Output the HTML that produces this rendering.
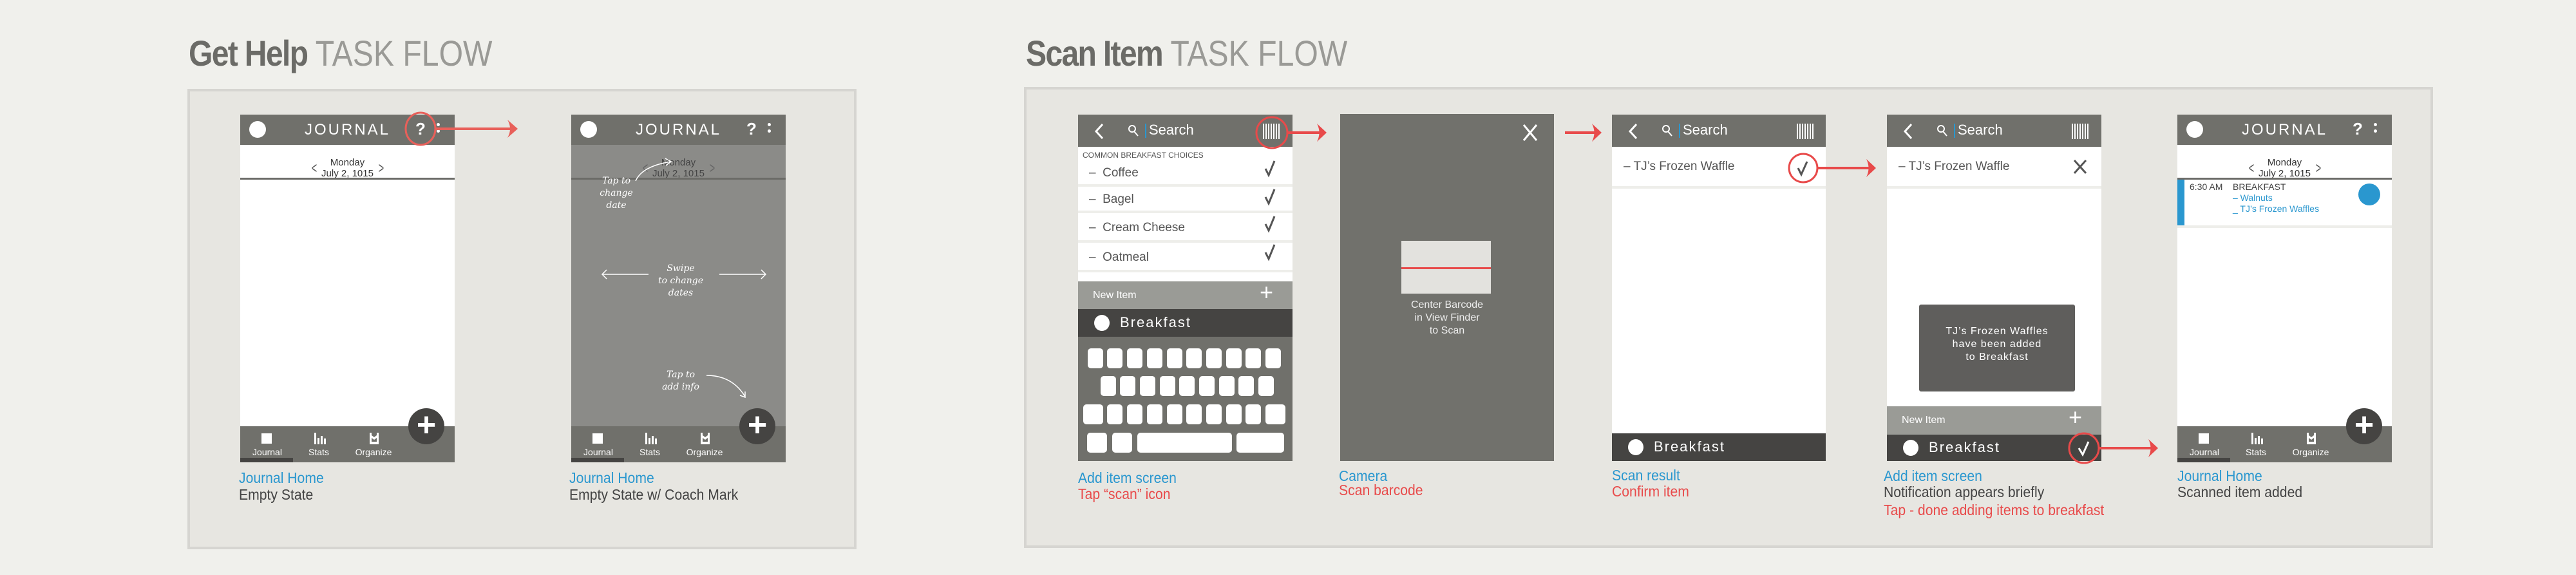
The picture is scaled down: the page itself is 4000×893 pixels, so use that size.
<!DOCTYPE html>
<html><head><meta charset="utf-8">
<style>
*{margin:0;padding:0;box-sizing:border-box}
body{width:4000px;height:893px;background:#f0f0ec;position:relative;overflow:hidden;font-family:"Liberation Sans Narrow","Liberation Sans",sans-serif}
.a{position:absolute}
.title{position:absolute;top:50px;font-size:56px;color:#6b6b67;white-space:nowrap;font-family:"Liberation Sans",sans-serif;transform:scaleX(.86);transform-origin:left top}
.title b{font-weight:bold;letter-spacing:-2px}
.title span{font-weight:normal;color:#9a9a96;letter-spacing:0px}
.panel{position:absolute;background:#e7e6e1;border:4px solid #d6d5d1}
.phone{position:absolute;width:333px;height:540px;background:#fff;overflow:hidden}
.hdr{position:absolute;left:0;top:0;width:100%;height:47px;background:#70706b}
.dot{position:absolute;width:26px;height:26px;border-radius:50%;background:#fff}
.jt{position:absolute;left:0;width:100%;top:10px;text-align:center;color:#fff;font-size:24px;letter-spacing:3px;font-family:"Liberation Sans",sans-serif}
.q{position:absolute;color:#fff;font-size:26px;font-weight:bold;font-family:"Liberation Sans",sans-serif;top:7px}
.vd{position:absolute;width:5px;height:5px;border-radius:50%;background:#fff}
.date{position:absolute;left:0;width:100%;text-align:center;font-size:15px;color:#333;line-height:17px;font-family:"Liberation Sans",sans-serif}
.nav{position:absolute;left:0;top:484px;width:100%;height:56px;background:#70706b}
.nl{position:absolute;top:32px;color:#fff;font-size:14px;font-family:"Liberation Sans",sans-serif;transform:translateX(-50%)}
.fab{position:absolute;width:56px;height:56px;border-radius:50%;background:#454442;color:#fff;font-size:52px;line-height:52px;text-align:center;font-weight:bold;font-family:"Liberation Sans",sans-serif}
.lbl{position:absolute;font-size:23px;line-height:26px;white-space:nowrap;transform:scaleX(.92);transform-origin:left top}
.blue{color:#2a97cf}.red{color:#e84a4a}.dk{color:#444}
.sh{position:absolute;left:0;top:0;width:100%;height:50px;background:#70706b;color:#fff}
.row{position:absolute;left:0;width:100%;background:#fff;border-bottom:4px solid #eeeeea;font-size:19px;color:#555;font-family:"Liberation Sans",sans-serif}
.bf{position:absolute;left:0;width:100%;height:43px;background:#454442;color:#fff;font-size:22px;letter-spacing:2px;font-family:"Liberation Sans",sans-serif}
.ni{position:absolute;left:0;width:100%;height:44px;background:#9a9b96;color:#fff;font-size:16px;font-family:"Liberation Sans",sans-serif}
.key{position:absolute;height:31px;background:#fff;border-radius:5px}
.hand{font-family:"DejaVu Serif",serif;font-style:italic;color:#fff;font-size:14px;text-align:center;position:absolute;line-height:19px}
</style></head><body>

<div class="title" style="left:293px"><b>Get Help</b> <span>TASK FLOW</span></div>
<div class="title" style="left:1593px"><b>Scan Item</b> <span>TASK FLOW</span></div>

<div class="panel" style="left:291px;top:138px;width:1039px;height:715px"></div>
<div class="panel" style="left:1590px;top:135px;width:2188px;height:716px"></div>

<!-- Phone 1 -->
<div class="phone" style="left:373px;top:178px">
 <div class="hdr"><div class="dot" style="left:14px;top:10px"></div><div class="jt">JOURNAL</div><div class="q" style="left:272px">?</div>
 <div class="vd" style="left:305px;top:13px"></div><div class="vd" style="left:305px;top:23px"></div></div>
 <div class="date" style="top:66px">Monday<br>July 2, 1015</div>
 <div class="a" style="left:108px;top:70px;font-size:24px;color:#555;transform:scaleX(.6)">&lt;</div>
 <div class="a" style="left:212px;top:70px;font-size:24px;color:#555;transform:scaleX(.6)">&gt;</div>
 <div class="a" style="left:0;top:98px;width:100%;height:3px;background:#6b6b67"></div>
 <div class="nav">
  <div class="a" style="left:33px;top:11px;width:16px;height:16px;background:#fff"></div>
  <svg class="a" style="left:114px;top:8px" width="20" height="20"><rect x="1" y="2" width="3" height="18" fill="#fff"/><rect x="6" y="10" width="3" height="10" fill="#fff"/><rect x="11" y="7" width="3" height="13" fill="#fff"/><rect x="16" y="11" width="3" height="9" fill="#fff"/></svg>
  <svg class="a" style="left:200px;top:8px" width="16" height="20"><path d="M1 2h3v4l4 3 4-3V2h3v18H1z" fill="#fff"/><path d="M4 10l4 3 4-3v6H4z" fill="#70706b"/></svg>
  <div class="nl" style="left:42px">Journal</div><div class="nl" style="left:122px">Stats</div><div class="nl" style="left:207px">Organize</div>
  <div class="a" style="left:0;top:49px;width:82px;height:7px;background:#454442"></div>
 </div>
 <div class="fab" style="left:261px;top:456px">+</div>
</div>
<svg class="a" style="left:620px;top:170px" width="200" height="60"><ellipse cx="33" cy="30" rx="23" ry="25" fill="none" stroke="#e8605a" stroke-width="3"/><line x1="57" y1="30" x2="180" y2="30" stroke="#e8605a" stroke-width="4"/><path d="M168 16 L184 30 L168 44 Q176 30 168 16z" fill="#e8605a"/></svg>

<!-- Phone 2 coach -->
<div class="phone" style="left:887px;top:178px;background:#8b8b88">
 <div class="hdr"><div class="dot" style="left:14px;top:10px"></div><div class="jt">JOURNAL</div><div class="q" style="left:272px">?</div>
 <div class="vd" style="left:305px;top:13px"></div><div class="vd" style="left:305px;top:23px"></div></div>
 <div class="date" style="top:66px;color:#444">Monday<br>July 2, 1015</div>
 <div class="a" style="left:108px;top:70px;font-size:24px;color:#666;transform:scaleX(.6)">&lt;</div>
 <div class="a" style="left:212px;top:70px;font-size:24px;color:#666;transform:scaleX(.6)">&gt;</div>
 <div class="a" style="left:0;top:98px;width:100%;height:3px;background:#6b6b67"></div>
 <div class="hand" style="left:30px;top:94px;width:80px">Tap to<br>change<br>date</div>
 <div class="hand" style="left:130px;top:230px;width:80px">Swipe<br>to change<br>dates</div>
 <div class="hand" style="left:135px;top:395px;width:70px">Tap to<br>add info</div>
 <svg class="a" style="left:0;top:0" width="333" height="480" fill="none" stroke="#fff" stroke-width="1.5">
  <path d="M100 103 Q110 80 155 73"/><path d="M146 68l9 5-8 6"/>
  <path d="M120 248H48"/><path d="M55 241l-7 7 7 7"/>
  <path d="M230 248h72"/><path d="M295 241l7 7-7 7"/>
  <path d="M210 405 Q250 405 270 438"/><path d="M262 436l8 3 0-9"/>
 </svg>
 <div class="nav">
  <div class="a" style="left:33px;top:11px;width:16px;height:16px;background:#fff"></div>
  <svg class="a" style="left:114px;top:8px" width="20" height="20"><rect x="1" y="2" width="3" height="18" fill="#fff"/><rect x="6" y="10" width="3" height="10" fill="#fff"/><rect x="11" y="7" width="3" height="13" fill="#fff"/><rect x="16" y="11" width="3" height="9" fill="#fff"/></svg>
  <svg class="a" style="left:200px;top:8px" width="16" height="20"><path d="M1 2h3v4l4 3 4-3V2h3v18H1z" fill="#fff"/><path d="M4 10l4 3 4-3v6H4z" fill="#70706b"/></svg>
  <div class="nl" style="left:42px">Journal</div><div class="nl" style="left:122px">Stats</div><div class="nl" style="left:207px">Organize</div>
  <div class="a" style="left:0;top:49px;width:82px;height:7px;background:#454442"></div>
 </div>
 <div class="fab" style="left:261px;top:456px">+</div>
</div>

<div class="lbl blue" style="left:371px;top:729px">Journal Home</div>
<div class="lbl dk" style="left:371px;top:755px">Empty State</div>
<div class="lbl blue" style="left:884px;top:729px">Journal Home</div>
<div class="lbl dk" style="left:884px;top:755px">Empty State w/ Coach Mark</div>

<!-- Phone A add item -->
<div class="phone" style="left:1674px;top:178px;height:538px">
 <div class="sh">
  <svg class="a" style="left:25px;top:13px" width="16" height="26"><path d="M13 2L3 13l10 11" stroke="#fff" stroke-width="3" fill="none"/></svg>
  <svg class="a" style="left:77px;top:15px" width="18" height="20"><circle cx="7" cy="7" r="5" stroke="#fff" stroke-width="2" fill="none"/><path d="M10 11l6 7" stroke="#fff" stroke-width="2"/></svg>
  <div class="a" style="left:104px;top:14px;width:2px;height:22px;background:#2a97cf"></div>
  <div class="a" style="left:110px;top:11px;font-size:22px">Search</div>
  <svg class="a" style="left:287px;top:14px" width="26" height="24"><g fill="#fff"><rect x="0" width="2" height="24"/><rect x="4" width="2" height="24"/><rect x="8" width="2" height="24"/><rect x="12" width="2" height="24"/><rect x="16" width="2" height="24"/><rect x="20" width="2" height="24"/><rect x="24" width="2" height="24"/></g></svg>
 </div>
 <div class="a" style="left:7px;top:56px;font-size:12px;color:#555;font-family:'Liberation Sans',sans-serif">COMMON BREAKFAST CHOICES</div>
 <div class="row" style="top:72px;height:40px"><span class="a" style="left:17px;top:8px">–&nbsp; Coffee</span></div>
 <div class="row" style="top:112px;height:41px"><span class="a" style="left:17px;top:9px">–&nbsp; Bagel</span></div>
 <div class="row" style="top:153px;height:46px"><span class="a" style="left:17px;top:12px">–&nbsp; Cream Cheese</span></div>
 <div class="row" style="top:199px;height:46px"><span class="a" style="left:17px;top:12px">–&nbsp; Oatmeal</span></div>
 <svg class="a" style="left:287px;top:70px" width="24" height="180" fill="none" stroke="#555" stroke-width="3"><path d="M4 14l5 10 9-22"/><path d="M4 58l5 10 9-22"/><path d="M4 100l5 10 9-22"/><path d="M4 144l5 10 9-22"/></svg>
 <div class="ni" style="top:259px"><span class="a" style="left:23px;top:13px">New Item</span><span class="a" style="left:282px;top:-4px;font-size:36px">+</span></div>
 <div class="bf" style="top:302px"><div class="dot" style="left:25px;top:9px;width:24px;height:25px"></div><span class="a" style="left:65px;top:8px">Breakfast</span></div>
 <div class="a" style="left:0;top:345px;width:100%;height:193px;background:#70706b"></div>
 <div class="a" style="left:0;top:0;width:100%;height:100%">
  <div class="key" style="left:15px;top:363px;width:24px"></div><div class="key" style="left:45px;top:363px;width:24px"></div><div class="key" style="left:76px;top:363px;width:24px"></div><div class="key" style="left:107px;top:363px;width:24px"></div><div class="key" style="left:138px;top:363px;width:24px"></div><div class="key" style="left:168px;top:363px;width:24px"></div><div class="key" style="left:199px;top:363px;width:24px"></div><div class="key" style="left:230px;top:363px;width:24px"></div><div class="key" style="left:260px;top:363px;width:24px"></div><div class="key" style="left:291px;top:363px;width:24px"></div>
  <div class="key" style="left:35px;top:406px;width:24px"></div><div class="key" style="left:65px;top:406px;width:24px"></div><div class="key" style="left:96px;top:406px;width:24px"></div><div class="key" style="left:127px;top:406px;width:24px"></div><div class="key" style="left:157px;top:406px;width:24px"></div><div class="key" style="left:188px;top:406px;width:24px"></div><div class="key" style="left:219px;top:406px;width:24px"></div><div class="key" style="left:249px;top:406px;width:24px"></div><div class="key" style="left:280px;top:406px;width:24px"></div>
  <div class="key" style="left:8px;top:450px;width:31px"></div><div class="key" style="left:45px;top:450px;width:24px"></div><div class="key" style="left:76px;top:450px;width:24px"></div><div class="key" style="left:107px;top:450px;width:24px"></div><div class="key" style="left:138px;top:450px;width:24px"></div><div class="key" style="left:168px;top:450px;width:24px"></div><div class="key" style="left:199px;top:450px;width:24px"></div><div class="key" style="left:230px;top:450px;width:24px"></div><div class="key" style="left:260px;top:450px;width:24px"></div><div class="key" style="left:291px;top:450px;width:31px"></div>
  <div class="key" style="left:14px;top:494px;width:31px"></div><div class="key" style="left:53px;top:494px;width:31px"></div><div class="key" style="left:92px;top:494px;width:147px"></div><div class="key" style="left:246px;top:494px;width:74px"></div>
 </div>
</div>
<svg class="a" style="left:1945px;top:180px" width="120" height="55"><circle cx="30" cy="26" r="24" fill="none" stroke="#e84a4a" stroke-width="3"/><line x1="54" y1="26" x2="108" y2="26" stroke="#e84a4a" stroke-width="4"/><path d="M100 12 L115 26 L100 40 Q107 26 100 12z" fill="#e84a4a"/></svg>

<!-- Phone B camera -->
<div class="a" style="left:2081px;top:177px;width:332px;height:539px;background:#71716c">
 <svg class="a" style="left:283px;top:15px" width="24" height="28"><path d="M2 2l20 24M22 2L2 26" stroke="#fff" stroke-width="3"/></svg>
 <div class="a" style="left:95px;top:197px;width:139px;height:82px;background:#e3e2de"></div>
 <div class="a" style="left:95px;top:238px;width:139px;height:3px;background:#e84a4a"></div>
 <div class="a" style="left:0;top:287px;width:100%;text-align:center;color:#eee;font-size:16px;line-height:20px;font-family:'Liberation Sans',sans-serif">Center Barcode<br>in View Finder<br>to Scan</div>
</div>
<svg class="a" style="left:2428px;top:190px" width="65" height="35"><line x1="2" y1="16" x2="52" y2="16" stroke="#e84a4a" stroke-width="4"/><path d="M44 2 L59 16 L44 30 Q51 16 44 2z" fill="#e84a4a"/></svg>

<!-- Phone C -->
<div class="phone" style="left:2503px;top:178px;width:332px;height:538px">
 <div class="sh">
  <svg class="a" style="left:25px;top:13px" width="16" height="26"><path d="M13 2L3 13l10 11" stroke="#fff" stroke-width="3" fill="none"/></svg>
  <svg class="a" style="left:77px;top:15px" width="18" height="20"><circle cx="7" cy="7" r="5" stroke="#fff" stroke-width="2" fill="none"/><path d="M10 11l6 7" stroke="#fff" stroke-width="2"/></svg>
  <div class="a" style="left:104px;top:14px;width:2px;height:22px;background:#2a97cf"></div>
  <div class="a" style="left:110px;top:11px;font-size:22px">Search</div>
  <svg class="a" style="left:287px;top:14px" width="26" height="24"><g fill="#fff"><rect x="0" width="2" height="24"/><rect x="4" width="2" height="24"/><rect x="8" width="2" height="24"/><rect x="12" width="2" height="24"/><rect x="16" width="2" height="24"/><rect x="20" width="2" height="24"/><rect x="24" width="2" height="24"/></g></svg>
 </div>
 <div class="row" style="top:50px;height:65px"><span class="a" style="left:18px;top:20px">– TJ’s Frozen Waffle</span></div>
 <div class="bf" style="top:495px"><div class="dot" style="left:25px;top:9px;width:24px;height:25px"></div><span class="a" style="left:65px;top:8px">Breakfast</span></div>
</div>
<svg class="a" style="left:2770px;top:230px" width="150" height="60"><circle cx="30" cy="31" r="22" fill="none" stroke="#e84a4a" stroke-width="3"/><path d="M22 31l5 10 9-20" stroke="#555" stroke-width="3" fill="none"/><line x1="52" y1="31" x2="135" y2="31" stroke="#e84a4a" stroke-width="4"/><path d="M128 17 L143 31 L128 45 Q135 31 128 17z" fill="#e84a4a"/></svg>

<!-- Phone D -->
<div class="phone" style="left:2930px;top:178px;height:538px">
 <div class="sh">
  <svg class="a" style="left:25px;top:13px" width="16" height="26"><path d="M13 2L3 13l10 11" stroke="#fff" stroke-width="3" fill="none"/></svg>
  <svg class="a" style="left:77px;top:15px" width="18" height="20"><circle cx="7" cy="7" r="5" stroke="#fff" stroke-width="2" fill="none"/><path d="M10 11l6 7" stroke="#fff" stroke-width="2"/></svg>
  <div class="a" style="left:104px;top:14px;width:2px;height:22px;background:#2a97cf"></div>
  <div class="a" style="left:110px;top:11px;font-size:22px">Search</div>
  <svg class="a" style="left:287px;top:14px" width="26" height="24"><g fill="#fff"><rect x="0" width="2" height="24"/><rect x="4" width="2" height="24"/><rect x="8" width="2" height="24"/><rect x="12" width="2" height="24"/><rect x="16" width="2" height="24"/><rect x="20" width="2" height="24"/><rect x="24" width="2" height="24"/></g></svg>
 </div>
 <div class="row" style="top:50px;height:65px"><span class="a" style="left:18px;top:20px">– TJ’s Frozen Waffle</span>
  <svg class="a" style="left:289px;top:19px" width="22" height="24"><path d="M2 2l18 20M20 2L2 22" stroke="#555" stroke-width="3"/></svg></div>
 <div class="a" style="left:50px;top:295px;width:242px;height:135px;background:#5f5e5c;border-radius:3px;color:#fff;text-align:center;font-size:16px;line-height:20px;letter-spacing:1px;padding-top:32px;font-family:'Liberation Sans',sans-serif">TJ’s Frozen Waffles<br>have been added<br>to Breakfast</div>
 <div class="ni" style="top:453px"><span class="a" style="left:23px;top:13px">New Item</span><span class="a" style="left:282px;top:-4px;font-size:36px">+</span></div>
 <div class="bf" style="top:497px;height:41px"><div class="dot" style="left:25px;top:8px;width:24px;height:25px"></div><span class="a" style="left:65px;top:7px">Breakfast</span></div>
</div>
<svg class="a" style="left:3205px;top:668px" width="160" height="58"><circle cx="31" cy="28" r="23" fill="none" stroke="#e84a4a" stroke-width="3"/><path d="M23 28l6 10 9-20" stroke="#fff" stroke-width="3" fill="none"/><line x1="54" y1="28" x2="138" y2="28" stroke="#e84a4a" stroke-width="4"/><path d="M131 14 L146 28 L131 42 Q138 28 131 14z" fill="#e84a4a"/></svg>

<!-- Phone E -->
<div class="phone" style="left:3381px;top:178px">
 <div class="hdr"><div class="dot" style="left:14px;top:10px"></div><div class="jt">JOURNAL</div><div class="q" style="left:272px">?</div>
 <div class="vd" style="left:305px;top:13px"></div><div class="vd" style="left:305px;top:23px"></div></div>
 <div class="date" style="top:66px">Monday<br>July 2, 1015</div>
 <div class="a" style="left:108px;top:70px;font-size:24px;color:#555;transform:scaleX(.6)">&lt;</div>
 <div class="a" style="left:212px;top:70px;font-size:24px;color:#555;transform:scaleX(.6)">&gt;</div>
 <div class="a" style="left:0;top:98px;width:100%;height:3px;background:#6b6b67"></div>
 <div class="a" style="left:0;top:101px;width:11px;height:71px;background:#2a97cf"></div>
 <div class="a" style="left:0;top:172px;width:100%;height:4px;background:#eeeeea"></div>
 <div class="a" style="left:19px;top:104px;font-size:14px;color:#444;font-family:'Liberation Sans',sans-serif">6:30 AM</div>
 <div class="a" style="left:86px;top:104px;font-size:14px;color:#444;line-height:17px;font-family:'Liberation Sans',sans-serif">BREAKFAST<br><span class="blue">– Walnuts<br>_ TJ’s Frozen Waffles</span></div>
 <div class="a" style="left:281px;top:107px;width:34px;height:34px;border-radius:50%;background:#2a97cf"></div>
 <div class="nav">
  <div class="a" style="left:33px;top:11px;width:16px;height:16px;background:#fff"></div>
  <svg class="a" style="left:114px;top:8px" width="20" height="20"><rect x="1" y="2" width="3" height="18" fill="#fff"/><rect x="6" y="10" width="3" height="10" fill="#fff"/><rect x="11" y="7" width="3" height="13" fill="#fff"/><rect x="16" y="11" width="3" height="9" fill="#fff"/></svg>
  <svg class="a" style="left:200px;top:8px" width="16" height="20"><path d="M1 2h3v4l4 3 4-3V2h3v18H1z" fill="#fff"/><path d="M4 10l4 3 4-3v6H4z" fill="#70706b"/></svg>
  <div class="nl" style="left:42px">Journal</div><div class="nl" style="left:122px">Stats</div><div class="nl" style="left:207px">Organize</div>
  <div class="a" style="left:0;top:49px;width:82px;height:7px;background:#454442"></div>
 </div>
 <div class="fab" style="left:262px;top:456px">+</div>
</div>

<div class="lbl blue" style="left:1674px;top:729px">Add item screen</div>
<div class="lbl red" style="left:1674px;top:754px">Tap “scan” icon</div>
<div class="lbl blue" style="left:2079px;top:726px">Camera</div>
<div class="lbl red" style="left:2079px;top:748px">Scan barcode</div>
<div class="lbl blue" style="left:2503px;top:725px">Scan result</div>
<div class="lbl red" style="left:2503px;top:750px">Confirm item</div>
<div class="lbl blue" style="left:2925px;top:726px">Add item screen</div>
<div class="lbl dk" style="left:2925px;top:751px">Notification appears briefly</div>
<div class="lbl red" style="left:2925px;top:779px">Tap - done adding items to breakfast</div>
<div class="lbl blue" style="left:3381px;top:726px">Journal Home</div>
<div class="lbl dk" style="left:3381px;top:751px">Scanned item added</div>
</body></html>
